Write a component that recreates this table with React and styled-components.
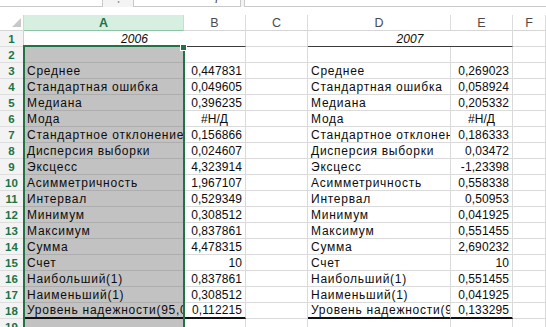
import React from "react";
import styled, { createGlobalStyle } from "styled-components";

const columns = ["A", "B", "C", "D", "E", "F"];

const stats = [
  ["Среднее", "0,447831", "0,269023"],
  ["Стандартная ошибка", "0,049605", "0,058924"],
  ["Медиана", "0,396235", "0,205332"],
  ["Мода", "#Н/Д", "#Н/Д"],
  ["Стандартное отклонение", "0,156866", "0,186333"],
  ["Дисперсия выборки", "0,024607", "0,03472"],
  ["Эксцесс", "4,323914", "-1,23398"],
  ["Асимметричность", "1,967107", "0,558338"],
  ["Интервал", "0,529349", "0,50953"],
  ["Минимум", "0,308512", "0,041925"],
  ["Максимум", "0,837861", "0,551455"],
  ["Сумма", "4,478315", "2,690232"],
  ["Счет", "10", "10"],
  ["Наибольший(1)", "0,837861", "0,551455"],
  ["Наименьший(1)", "0,308512", "0,041925"],
  ["Уровень надежности(95,0%)", "0,112215", "0,133295"],
];

const GlobalStyle = createGlobalStyle`
  body {
    margin: 0;
    background: #fff;
    font-family: "Liberation Sans", Arial, sans-serif;
  }
`;

const App = () => (
  <>
    <GlobalStyle />
    <Window>
      <FormulaBar>
        <NameBox>A1</NameBox>
        <Grip>⋮</Grip>
        <FxBox>
          <FxIcon>✕</FxIcon>
          <FxIcon>✓</FxIcon>
          <FxIcon $italic>fx</FxIcon>
        </FxBox>
        <FormulaInput>2006</FormulaInput>
      </FormulaBar>

      <Sheet>
        <Corner>
          <svg width="9" height="9" viewBox="0 0 9 9">
            <path d="M9 0 L9 9 L0 9 Z" fill="#c8c8c8" />
          </svg>
        </Corner>
        {columns.map(col => (
          <ColHeader key={col} $active={col === "A"}>
            {col}
          </ColHeader>
        ))}

        <RowHeader>1</RowHeader>
        <Cell $span={2} $italic $align="center" $bottom="thin">
          2006
        </Cell>
        <Cell />
        <Cell $span={2} $italic $align="center" $bottom="thin">
          2007
        </Cell>
        <Cell />

        <RowHeader>2</RowHeader>
        <Cell $gray />
        <Cell />
        <Cell />
        <Cell />
        <Cell />
        <Cell />

        {stats.map(([label, a, b], i) => {
          const last = i === stats.length - 1;
          const edge = last ? "thick" : undefined;
          const align = v => (v.startsWith("#") ? "center" : "right");
          return (
            <React.Fragment key={label}>
              <RowHeader>{i + 3}</RowHeader>
              <Cell $gray $label $bottom={edge}>
                {label}
              </Cell>
              <Cell $align={align(a)} $bottom={edge}>
                {a}
              </Cell>
              <Cell />
              <Cell $label $bottom={edge}>
                {label}
              </Cell>
              <Cell $align={align(b)} $bottom={edge}>
                {b}
              </Cell>
              <Cell />
            </React.Fragment>
          );
        })}

        <RowHeader>19</RowHeader>
        <Cell $gray />
        <Cell />
        <Cell />
        <Cell />
        <Cell />
        <Cell />

        <Selection />
      </Sheet>
    </Window>
  </>
);

const Window = styled.div`
  width: 546px;
  height: 327px;
  overflow: hidden;
  display: flex;
  flex-direction: column;
  background: #fff;
`;

const FormulaBar = styled.div`
  height: 7px;
  flex: none;
  display: flex;
  align-items: flex-end;
  overflow: hidden;
  background: #f4f4f4;
  margin-bottom: 8px;
`;

const BarBox = styled.div`
  height: 22px;
  box-sizing: border-box;
  background: #fff;
  border: 1px solid #c9c9c9;
  display: flex;
  align-items: center;
  font-size: 12px;
  color: #333;
`;

const NameBox = styled(BarBox)`
  width: 103px;
  border-left: none;
  padding-left: 7px;
`;

const Grip = styled.div`
  width: 30px;
  height: 22px;
  display: flex;
  align-items: center;
  justify-content: center;
  color: #9a9a9a;
  font-size: 13px;
`;

const FxBox = styled(BarBox)`
  width: 108px;
  justify-content: space-around;
  padding: 0 4px;
`;

const FxIcon = styled.span`
  color: ${p => (p.$italic ? "#555" : "#b5b5b5")};
  font-style: ${p => (p.$italic ? "italic" : "normal")};
  font-family: ${p => (p.$italic ? '"Liberation Serif", serif' : "inherit")};
  font-size: 14px;
`;

const FormulaInput = styled(BarBox)`
  flex: 1;
  margin-left: 3px;
  border-right: none;
  padding-left: 9px;
`;

const Sheet = styled.div`
  position: relative;
  display: grid;
  grid-template-columns: 24px 160px 62px 62px 143px 62px 1fr;
  grid-auto-rows: 16px;
  font-size: 12px;
  color: #0c0c0c;
`;

const Corner = styled.div`
  box-sizing: border-box;
  border-right: 1px solid #d6d6d6;
  border-bottom: 1px solid #d6d6d6;
  display: flex;
  align-items: flex-end;
  justify-content: flex-end;
  padding: 0 2px 3px 0;
`;

const ColHeader = styled.div`
  box-sizing: border-box;
  display: flex;
  align-items: center;
  justify-content: center;
  font-size: 12.5px;
  background: ${p => (p.$active ? "#d6efe0" : "#fff")};
  color: ${p => (p.$active ? "#217346" : "#4a4a4a")};
  font-weight: ${p => (p.$active ? "bold" : "normal")};
  border-right: 1px solid ${p => (p.$active ? "#bfe3cd" : "#dcdcdc")};
  border-bottom: 1px solid ${p => (p.$active ? "#8cc4a3" : "#d6d6d6")};
`;

const RowHeader = styled.div`
  box-sizing: border-box;
  display: flex;
  align-items: center;
  justify-content: center;
  background: #f3f3f3;
  color: #217346;
  font-weight: bold;
  font-size: 11.5px;
  border-bottom: 1px solid #dedede;
  border-right: 1px solid #cfcfcf;
`;

const bottomBorder = {
  thin: "1px solid #3c3c3c",
  thick: "2px solid #111",
};

const Cell = styled.div`
  box-sizing: border-box;
  grid-column: span ${p => p.$span || 1};
  display: flex;
  align-items: center;
  justify-content: ${p =>
    p.$align === "right" ? "flex-end" : p.$align === "center" ? "center" : "flex-start"};
  padding: 0 3px;
  white-space: nowrap;
  overflow: hidden;
  letter-spacing: ${p => (p.$label ? "0.75px" : "0.1px")};
  font-style: ${p => (p.$italic ? "italic" : "normal")};
  background: ${p => (p.$gray ? "#c2c2c2" : "#fff")};
  border-right: 1px solid ${p => (p.$gray ? "#adadad" : "#dadada")};
  border-bottom: ${p =>
    bottomBorder[p.$bottom] || `1px solid ${p.$gray ? "#adadad" : "#dadada"}`};
`;

const Selection = styled.div`
  position: absolute;
  left: 23px;
  top: 30px;
  width: 162px;
  bottom: -4px;
  box-sizing: border-box;
  border: 2px solid #217346;
  pointer-events: none;

  &::after {
    content: "";
    position: absolute;
    right: -4px;
    top: -3px;
    width: 5px;
    height: 5px;
    background: #217346;
    border: 1px solid #fff;
  }
`;

export default App;
